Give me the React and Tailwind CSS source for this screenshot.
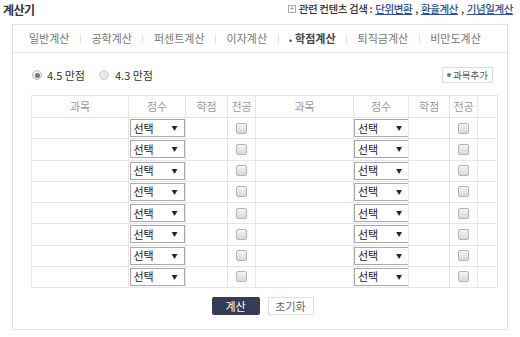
const font = { fontFamily: '"Noto Sans CJK KR", "Noto Sans", sans-serif' };

const tabs = ["일반계산", "공학계산", "퍼센트계산", "이자계산", "학점계산", "퇴직금계산", "비만도계산"];

const GradeSelect = () => (
  <div className="mx-auto flex h-[18px] w-[55px] items-center justify-between border border-[#a9a9a9] bg-white pl-[3px] pr-[6px] text-[11px] leading-none text-[#222]">
    <span>선택</span>
    <span className="text-[6px]">▼</span>
  </div>
);

const Check = () => (
  <span className="mx-auto block h-[11px] w-[11px] rounded-[2px] border border-[#b5b5b5] bg-gradient-to-b from-[#f4f4f4] to-[#d9d9d9]" />
);

export default function App() {
  const rows = Array.from({ length: 8 });
  return (
    <div className="h-[337px] w-[520px] overflow-hidden bg-white" style={font}>
      <div className="flex h-[24px] items-start justify-between pl-[3px] pr-[7px] pt-[1px]">
        <span className="text-[12px] font-bold tracking-[-0.5px] text-[#333]">계산기</span>
        <div className="flex items-center gap-[3px] text-[10.5px] font-medium tracking-[-0.4px] text-[#333]">
          <span className="flex h-[8px] w-[8px] items-center justify-center border border-[#aaa] text-[7px] leading-none text-[#777]">+</span>
          <span>관련 컨텐츠 검색 :</span>
          <span className="text-[#2c4f9e] underline">단위변환</span>
          <span>,</span>
          <span className="text-[#2c4f9e] underline">환율계산</span>
          <span>,</span>
          <span className="text-[#2c4f9e] underline">기념일계산</span>
        </div>
      </div>
      <div className="ml-[12px] h-[306px] w-[496px] border border-[#e3e3e3]">
        <div className="flex h-[28px] items-center border-b border-[#e3e3e3] pl-[16px] text-[11px] text-[#777]">
          {tabs.map((t, i) => (
            <div key={t} className="flex items-center">
              {i > 0 && <span className="mx-[10.5px] h-[10px] w-px bg-[#e3e3e3]" />}
              {t === "학점계산" ? (
                <span className="font-bold text-[#444]">
                  <span className="mr-[3px] text-[8px]">•</span>
                  {t}
                </span>
              ) : (
                <span>{t}</span>
              )}
            </div>
          ))}
        </div>
        <div className="pl-[18px] pr-[11px]">
          <div className="flex h-[42px] items-center justify-between pt-[2px]">
            <div className="flex items-center pl-[1px] text-[11px] text-[#333]">
              <span className="flex h-[10px] w-[10px] items-center justify-center rounded-full border border-[#bbb] bg-[#eee]">
                <span className="h-[5px] w-[5px] rounded-full bg-[#777]" />
              </span>
              <span className="ml-[5px]">4.5 만점</span>
              <span className="ml-[14px] h-[10px] w-[10px] rounded-full border border-[#ccc] bg-[#e8e8e8]" />
              <span className="ml-[6px]">4.3 만점</span>
            </div>
            <div className="mr-[3px] flex h-[16px] w-[51px] items-center justify-center border border-[#ddd] text-[9.5px] text-[#555]">
              <span className="mr-[2px] h-[4px] w-[4px] rounded-full bg-[#3aa05a]" />과목추가
            </div>
          </div>
          <table className="w-[466px] table-fixed border-collapse text-[11px]">
            <colgroup>
              <col className="w-[97px]" />
              <col className="w-[57px]" />
              <col className="w-[42px]" />
              <col className="w-[28px]" />
              <col className="w-[98px]" />
              <col className="w-[55px]" />
              <col className="w-[41px]" />
              <col className="w-[28px]" />
              <col className="w-[20px]" />
            </colgroup>
            <thead>
              <tr className="h-[22px] text-[#999]">
                {["과목", "점수", "학점", "전공", "과목", "점수", "학점", "전공", ""].map((h, i) => (
                  <th key={i} className="border border-[#e6e6e6] p-0 text-center font-normal">
                    {h}
                  </th>
                ))}
              </tr>
            </thead>
            <tbody>
              {rows.map((_, r) => (
                <tr key={r} className="h-[21.25px]">
                  <td className="border border-[#e6e6e6] p-0" />
                  <td className="border border-[#e6e6e6] p-0"><GradeSelect /></td>
                  <td className="border border-[#e6e6e6] p-0" />
                  <td className="border border-[#e6e6e6] p-0"><Check /></td>
                  <td className="border border-[#e6e6e6] p-0" />
                  <td className="border border-[#e6e6e6] p-0"><GradeSelect /></td>
                  <td className="border border-[#e6e6e6] p-0" />
                  <td className="border border-[#e6e6e6] p-0"><Check /></td>
                  <td className="border border-[#e6e6e6] p-0" />
                </tr>
              ))}
            </tbody>
          </table>
          <div className="mt-[9px] flex justify-center gap-[8px] pr-[2px]">
            <div className="flex h-[18px] w-[48px] items-center justify-center rounded-[2px] bg-[#353c55] text-[11px] text-white">계산</div>
            <div className="flex h-[18px] w-[46px] items-center justify-center border border-[#ddd] bg-white text-[11px] text-[#666]">초기화</div>
          </div>
        </div>
      </div>
    </div>
  );
}
